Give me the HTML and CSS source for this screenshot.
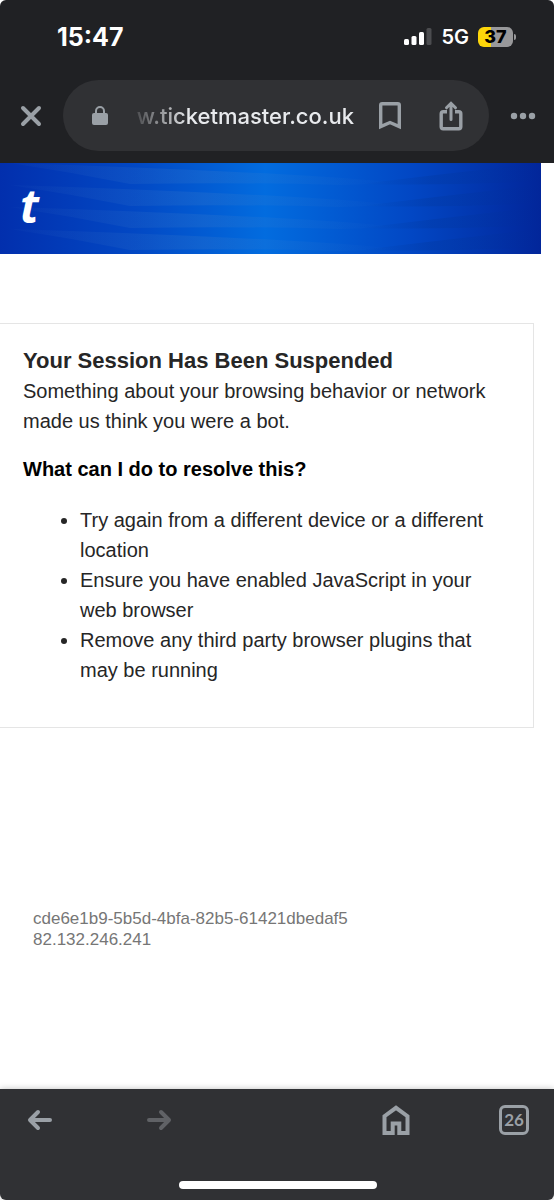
FILE: index.html
```html
<!DOCTYPE html>
<html lang="en">
    <head>
        <meta charset="utf-8">
        <meta name="viewport" content="width=device-width, initial-scale=1">
        <title>Your Session Has Been Suspended</title>
        <link rel="stylesheet" href="styles.css">
    </head>
    <body>

    <header class="browser-top">
        <div class="status-bar">
            <span class="time">15:47</span>
            <div class="status-icons">
                <svg width="28" height="18" viewBox="0 0 28 18" fill="#fff">
                    <rect x="0" y="11" width="5" height="6" rx="1.5"/>
                    <rect x="7.5" y="8" width="5" height="9" rx="1.5"/>
                    <rect x="15" y="4" width="5" height="13" rx="1.5"/>
                    <rect x="22.5" y="0" width="5" height="17" rx="1.5" fill="#4b4c4f"/>
                </svg>
                <span class="network">5G</span>
                <div class="battery">37</div>
            </div>
        </div>
        <div class="toolbar">
            <button class="icon-btn" type="button" aria-label="Close">
                <svg width="22" height="22" viewBox="0 0 22 22" fill="none" stroke="#9aa0a6" stroke-width="4" stroke-linecap="round">
                    <path d="M3 3L19 19M19 3L3 19"/>
                </svg>
            </button>
            <div class="address">
                <svg width="16" height="20" viewBox="0 0 16 20">
                    <rect x="0" y="7" width="16" height="12" rx="2" fill="#9aa0a6"/>
                    <path d="M4 8V5a4 4 0 0 1 8 0v3" fill="none" stroke="#9aa0a6" stroke-width="2"/>
                </svg>
                <input class="url" type="text" aria-label="Address" value="w.ticketmaster.co.uk">
                <button class="icon-btn" type="button" aria-label="Bookmark">
                    <svg width="22" height="28" viewBox="0 0 22 28" fill="none" stroke="#9aa0a6" stroke-width="3.4">
                        <path d="M1.7 24.6V3.2Q1.7 1.7 3.2 1.7H18.8Q20.3 1.7 20.3 3.2V24.6L11 20.5Z"/>
                    </svg>
                </button>
                <button class="icon-btn" type="button" aria-label="Share">
                    <svg width="24" height="30" viewBox="0 0 24 30" fill="none" stroke="#9aa0a6" stroke-width="3.4">
                        <path d="M8 10.7H4.2Q2.2 10.7 2.2 12.7V25.8Q2.2 27.8 4.2 27.8H19.8Q21.8 27.8 21.8 25.8V12.7Q21.8 10.7 19.8 10.7H16"/>
                        <path d="M12 18.5V3M7.5 6.8L12 2.3L16.5 6.8" stroke-width="3" stroke-linecap="round"/>
                    </svg>
                </button>
            </div>
            <button class="icon-btn" type="button" aria-label="Menu">
                <svg width="26" height="8" viewBox="0 0 26 8" fill="#9aa0a6">
                    <circle cx="4" cy="4" r="3.2"/>
                    <circle cx="13" cy="4" r="3.2"/>
                    <circle cx="22" cy="4" r="3.2"/>
                </svg>
            </button>
        </div>
    </header>

    <main class="content">
        <div class="banner">
            <svg class="banner-waves" viewBox="0 0 541 91" preserveAspectRatio="none" aria-hidden="true">
                <defs>
                    <linearGradient id="light">
                        <stop offset="0" stop-color="#4a82c8" stop-opacity="0.04"/>
                        <stop offset="0.5" stop-color="#4a82c8" stop-opacity="0.2"/>
                        <stop offset="1" stop-color="#4a82c8" stop-opacity="0"/>
                    </linearGradient>
                    <linearGradient id="dark">
                        <stop offset="0" stop-color="#00328c" stop-opacity="0"/>
                        <stop offset="0.4" stop-color="#00328c" stop-opacity="0.22"/>
                        <stop offset="1" stop-color="#00328c" stop-opacity="0"/>
                    </linearGradient>
                    <g id="wave">
                        <path fill="url(#light)" d="M10 0Q140 4 277 11Q340 14 400 20L340 22Q240 19 130 21Q70 9 10 0Z"/>
                        <path fill="url(#dark)" d="M360 21Q450 10 541 0V18Q450 23 360 21Z"/>
                    </g>
                </defs>
                <use href="#wave" y="-22"/>
                <use href="#wave"/>
                <use href="#wave" y="22"/>
                <use href="#wave" y="44"/>
                <use href="#wave" y="66"/>
            </svg>
            <a class="logo" href="/">t</a>
        </div>

        <div class="card">
            <h1>Your Session Has Been Suspended</h1>
            <p>Something about your browsing behavior or network made us think you were a bot.</p>
            <h2>What can I do to resolve this?</h2>
            <ul>
                <li>Try again from a different device or a different location</li>
                <li>Ensure you have enabled JavaScript in your web browser</li>
                <li>Remove any third party browser plugins that may be running</li>
            </ul>
        </div>

        <div class="request-info">
            <div>cde6e1b9-5b5d-4bfa-82b5-61421dbedaf5</div>
            <div>82.132.246.241</div>
        </div>
    </main>

    <footer class="browser-bottom">
        <nav class="nav-bar">
            <button class="icon-btn" type="button" aria-label="Back">
                <svg width="26" height="22" viewBox="0 0 26 22" fill="none" stroke="#9aa0a6" stroke-width="4" stroke-linecap="round" stroke-linejoin="round">
                    <path d="M23 11H3.5M11 3L3 11L11 19"/>
                </svg>
            </button>
            <button class="icon-btn" type="button" aria-label="Forward" disabled>
                <svg width="26" height="22" viewBox="0 0 26 22" fill="none" stroke="#606266" stroke-width="4" stroke-linecap="round" stroke-linejoin="round">
                    <path d="M3 11H22.5M15 3L23 11L15 19"/>
                </svg>
            </button>
            <button class="icon-btn home" type="button" aria-label="Home">
                <svg width="28" height="30" viewBox="0 0 28 30" fill="none" stroke="#9aa0a6" stroke-width="4">
                    <path d="M2.5 28V11.2L14 2.8L25.5 11.2V28H17.3V18.5H10.7V28Z"/>
                </svg>
            </button>
            <button class="tabs" type="button" aria-label="Open tabs">26</button>
        </nav>
        <div class="home-indicator"></div>
    </footer>

    </body>
</html>
```
FILE: styles.css
```css
* {
    box-sizing: border-box;
}

body {
    display: flex;
    flex-direction: column;
    min-height: 100vh;
    margin: 0;
    background-color: white;
    color: #262626;
    font-family: "Liberation Sans", Arial, sans-serif;
    font-size: 20px;
    line-height: 30px;
}

svg {
    display: block;
}

h1, h2, p, ul {
    margin: 0;
}

button {
    padding: 0;
    border: none;
    background: none;
}

.icon-btn {
    flex: none;
}

.browser-top {
    padding-bottom: 12px;
    border-radius: 6px 6px 0 0;
    background-color: #202124;
    font-family: Inter, sans-serif;
}

.status-bar {
    display: flex;
    align-items: center;
    justify-content: space-between;
    height: 74px;
    padding: 0 41px 0 57px;
    color: white;
}

.time {
    font-size: 25px;
    font-weight: 700;
}

.status-icons {
    display: flex;
    align-items: center;
    gap: 9px;
}

.network {
    font-size: 20px;
    font-weight: 600;
}

.battery {
    position: relative;
    width: 35px;
    border-radius: 6px;
    background: linear-gradient(to right, #fdd60a 37%, #98989a 37%);
    color: black;
    font-size: 18px;
    font-weight: 800;
    line-height: 20px;
    text-align: center;
}

.battery::after {
    content: "";
    position: absolute;
    top: 7px;
    right: -3px;
    width: 2px;
    height: 6px;
    border-radius: 0 2px 2px 0;
    background-color: #98989a;
}

.toolbar {
    display: flex;
    align-items: center;
    gap: 21px;
    padding: 6px 18px 0 20px;
}

.address {
    display: flex;
    flex: 1;
    align-items: center;
    min-width: 0;
    height: 71px;
    padding: 0 26px 0 29px;
    border-radius: 36px;
    background-color: #303134;
}

.address svg {
    flex: none;
}

.url {
    flex: 1;
    width: 0;
    min-width: 0;
    margin: 0 25px;
    padding: 0;
    border: none;
    outline: none;
    background: none;
    color: #e8eaed;
    font-family: inherit;
    font-size: 22px;
    font-weight: 500;
    text-align: right;
    -webkit-mask-image: linear-gradient(to right, rgba(0, 0, 0, 0.1), black 56px);
    mask-image: linear-gradient(to right, rgba(0, 0, 0, 0.1), black 56px);
}

.address .icon-btn + .icon-btn {
    margin-left: 38px;
}

.content {
    flex: 1;
}

.banner {
    position: relative;
    height: 91px;
    margin-right: 13px;
    padding: 18px 20px;
    background: linear-gradient(to right, #022fad, #0248c4 25%, #026cdf 49%, #0247c4 76%, #02269a);
}

.banner-waves {
    position: absolute;
    top: 0;
    left: 0;
    width: 100%;
    height: 100%;
}

.logo {
    position: relative;
    color: white;
    font-family: "Open Sans", sans-serif;
    font-size: 46px;
    font-style: italic;
    font-weight: 700;
    line-height: 48px;
    text-decoration: none;
}

.card {
    margin: 69px 20px 0 0;
    padding: 22px 23px 42px;
    border: 1px solid #e5e5e5;
    border-left: none;
}

.card h1 {
    font-size: 22px;
    line-height: 30px;
}

.card h2 {
    margin: 18px 0 21px;
    color: black;
    font-size: 20px;
    line-height: 30px;
}

.card ul {
    padding-left: 57px;
}

.request-info {
    padding: 180px 33px 40px;
    color: #767676;
    font-size: 17px;
    line-height: 21px;
}

.browser-bottom {
    padding: 16px 25px 11px 27px;
    border-radius: 0 0 6px 6px;
    background-color: #303134;
    box-shadow: 0 0 6px rgba(0, 0, 0, 0.25);
}

.nav-bar {
    display: flex;
    align-items: center;
}

.nav-bar .icon-btn + .icon-btn {
    margin-left: 93px;
}

.nav-bar .icon-btn.home {
    margin-left: auto;
}

.tabs {
    width: 30px;
    height: 30px;
    margin-left: 89px;
    border: 3px solid #9aa0a6;
    border-radius: 6px;
    color: #9aa0a6;
    font-family: Lato, sans-serif;
    font-size: 17px;
    font-weight: 700;
    line-height: 24px;
}

.home-indicator {
    width: 198px;
    height: 8px;
    margin: 46px auto 0;
    border-radius: 4px;
    background-color: white;
}
```
